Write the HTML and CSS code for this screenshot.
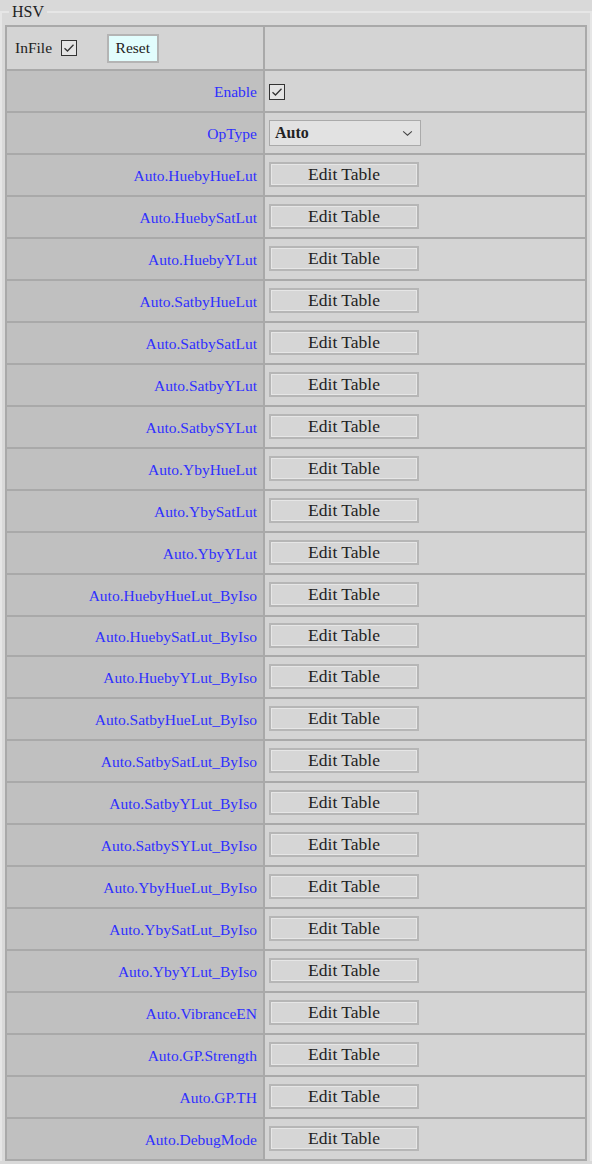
FILE: index.html
```html
<!doctype html>
<html lang="en">
  <head>
    <meta charset="UTF-8" />
    <title>HSV</title>
    <link rel="stylesheet" href="styles.css">
  </head>
  <body>
    <fieldset class="group">
      <legend class="group-title">HSV</legend>

      <table class="param-table">
        <colgroup>
          <col class="col-label">
          <col class="col-value">
        </colgroup>
        <tr class="head-row">
          <td class="head-cell">
            <span class="infile">InFile</span>
            <span class="check"><svg viewBox="0 0 16 16" width="16" height="16"><path d="M3.5 8.2 L6.5 11 L12.5 4.8" fill="none" stroke="#333" stroke-width="1.3"/></svg></span>
            <button class="btn-reset">Reset</button>
          </td>
          <td class="head-cell"></td>
        </tr>
        <tr>
          <td class="label">Enable</td>
          <td class="value">
            <span class="check"><svg viewBox="0 0 16 16" width="16" height="16"><path d="M3.5 8.2 L6.5 11 L12.5 4.8" fill="none" stroke="#333" stroke-width="1.3"/></svg></span>
          </td>
        </tr>
        <tr>
          <td class="label">OpType</td>
          <td class="value">
            <div class="select">
              <span>Auto</span>
              <svg viewBox="0 0 12 8" width="11" height="7"><path d="M1 1.5 L6 6 L11 1.5" fill="none" stroke="#444" stroke-width="1.2"/></svg>
            </div>
          </td>
        </tr>
        <tr><td class="label">Auto.HuebyHueLut</td><td class="value"><button class="btn-edit">Edit Table</button></td></tr>
        <tr><td class="label">Auto.HuebySatLut</td><td class="value"><button class="btn-edit">Edit Table</button></td></tr>
        <tr><td class="label">Auto.HuebyYLut</td><td class="value"><button class="btn-edit">Edit Table</button></td></tr>
        <tr><td class="label">Auto.SatbyHueLut</td><td class="value"><button class="btn-edit">Edit Table</button></td></tr>
        <tr><td class="label">Auto.SatbySatLut</td><td class="value"><button class="btn-edit">Edit Table</button></td></tr>
        <tr><td class="label">Auto.SatbyYLut</td><td class="value"><button class="btn-edit">Edit Table</button></td></tr>
        <tr><td class="label">Auto.SatbySYLut</td><td class="value"><button class="btn-edit">Edit Table</button></td></tr>
        <tr><td class="label">Auto.YbyHueLut</td><td class="value"><button class="btn-edit">Edit Table</button></td></tr>
        <tr><td class="label">Auto.YbySatLut</td><td class="value"><button class="btn-edit">Edit Table</button></td></tr>
        <tr><td class="label">Auto.YbyYLut</td><td class="value"><button class="btn-edit">Edit Table</button></td></tr>
        <tr><td class="label">Auto.HuebyHueLut_ByIso</td><td class="value"><button class="btn-edit">Edit Table</button></td></tr>
        <tr class="seam"><td class="label">Auto.HuebySatLut_ByIso</td><td class="value"><button class="btn-edit">Edit Table</button></td></tr>
        <tr><td class="label">Auto.HuebyYLut_ByIso</td><td class="value"><button class="btn-edit">Edit Table</button></td></tr>
        <tr><td class="label">Auto.SatbyHueLut_ByIso</td><td class="value"><button class="btn-edit">Edit Table</button></td></tr>
        <tr><td class="label">Auto.SatbySatLut_ByIso</td><td class="value"><button class="btn-edit">Edit Table</button></td></tr>
        <tr><td class="label">Auto.SatbyYLut_ByIso</td><td class="value"><button class="btn-edit">Edit Table</button></td></tr>
        <tr><td class="label">Auto.SatbySYLut_ByIso</td><td class="value"><button class="btn-edit">Edit Table</button></td></tr>
        <tr><td class="label">Auto.YbyHueLut_ByIso</td><td class="value"><button class="btn-edit">Edit Table</button></td></tr>
        <tr><td class="label">Auto.YbySatLut_ByIso</td><td class="value"><button class="btn-edit">Edit Table</button></td></tr>
        <tr><td class="label">Auto.YbyYLut_ByIso</td><td class="value"><button class="btn-edit">Edit Table</button></td></tr>
        <tr><td class="label">Auto.VibranceEN</td><td class="value"><button class="btn-edit">Edit Table</button></td></tr>
        <tr><td class="label">Auto.GP.Strength</td><td class="value"><button class="btn-edit">Edit Table</button></td></tr>
        <tr><td class="label">Auto.GP.TH</td><td class="value"><button class="btn-edit">Edit Table</button></td></tr>
        <tr><td class="label">Auto.DebugMode</td><td class="value"><button class="btn-edit">Edit Table</button></td></tr>
      </table>
    </fieldset>
  </body>
</html>
```

FILE: styles.css
```css
:root {
  --page-bg: #d9d9d9;
  --label-bg: #c0c0c0;
  --value-bg: #d4d4d4;
  --grid-line: #a9a9a9;
  --label-color: #2f2fff;
}

* {
  box-sizing: border-box;
}

body {
  margin: 0;
  background-color: var(--page-bg);
  font-family: "Liberation Serif", "Times New Roman", serif;
  color: #222;
}

.group {
  margin: 3px 0 0 0;
  padding: 4px 5px 0 5px;
  border: 2px solid #e6e6e6;
  border-bottom: none;
  min-width: 0;
}

.group-title {
  padding: 0 3px;
  margin-left: 2px;
  font-size: 16px;
  line-height: 18px;
  color: #222;
}

.param-table {
  width: 582px;
  margin-left: -2px;
  border-collapse: collapse;
  table-layout: fixed;
}

.col-label {
  width: 258px;
}

.param-table td {
  border: 2px solid var(--grid-line);
  height: 42px;
  padding: 0;
}

.param-table tr.seam td {
  height: 40px;
}

.param-table td.label {
  background-color: var(--label-bg);
  color: var(--label-color);
  text-align: right;
  padding-right: 6px;
  padding-top: 2px;
  font-size: 15.5px;
}

.param-table td.value {
  background-color: var(--value-bg);
  padding-left: 4px;
}

.param-table tr.head-row td {
  height: 44px;
  background-color: var(--value-bg);
}

.head-cell {
  font-size: 15.5px;
}

.infile {
  margin-left: 8px;
  vertical-align: middle;
}

.check {
  display: inline-block;
  width: 16px;
  height: 16px;
  border: 1px solid #333;
  background-color: #e4e4e4;
  vertical-align: middle;
  line-height: 0;
}

.check svg {
  margin: -1px 0 0 -1px;
}

.head-cell .check {
  margin-left: 5px;
}

.btn-reset {
  margin-left: 26px;
  height: 29px;
  width: 52px;
  padding: 0;
  border: 2px solid #b4b4b4;
  background-color: #e2fdfd;
  font-family: inherit;
  font-size: 15.5px;
  color: #222;
  vertical-align: middle;
}

.select {
  display: flex;
  align-items: center;
  justify-content: space-between;
  width: 152px;
  height: 26px;
  padding: 0 7px 0 5px;
  border: 1px solid #aaa;
  background-color: #e2e2e2;
  font-size: 16px;
  font-weight: bold;
}

.btn-edit {
  display: block;
  width: 150px;
  height: 25px;
  margin-top: -2px;
  padding: 0;
  border: 2px solid #b6b6b6;
  box-shadow: inset 0 0 0 1px #e6e6e6;
  background-color: #d6d6d6;
  font-family: inherit;
  font-size: 17.5px;
  color: #222;
}
```
